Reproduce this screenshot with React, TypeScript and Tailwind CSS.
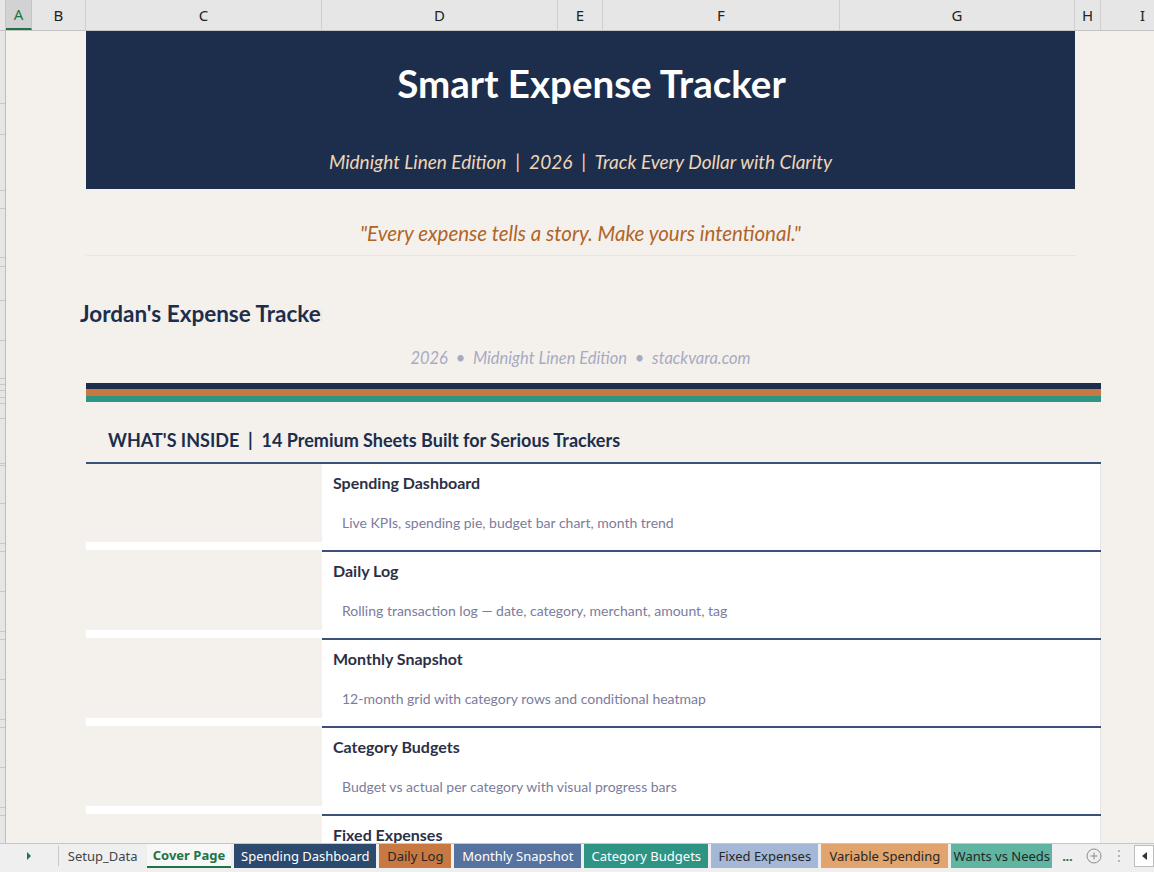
import React from 'react'

const cols = [
  { k: 'A', w: 26 },
  { k: 'B', w: 54 },
  { k: 'C', w: 236 },
  { k: 'D', w: 236 },
  { k: 'E', w: 45 },
  { k: 'F', w: 237 },
  { k: 'G', w: 235 },
  { k: 'H', w: 26 },
  { k: 'I', w: 84 },
]

const sheets = [
  { title: 'Spending Dashboard', desc: 'Live KPIs, spending pie, budget bar chart, month trend' },
  { title: 'Daily Log', desc: 'Rolling transaction log — date, category, merchant, amount, tag' },
  { title: 'Monthly Snapshot', desc: '12-month grid with category rows and conditional heatmap' },
  { title: 'Category Budgets', desc: 'Budget vs actual per category with visual progress bars' },
  { title: 'Fixed Expenses', desc: '' },
]

const tabs = [
  { name: 'Spending Dashboard', w: 142, cls: 'bg-[#2c4a6e] text-white' },
  { name: 'Daily Log', w: 72, cls: 'bg-[#c87941] text-[#262626]' },
  { name: 'Monthly Snapshot', w: 127, cls: 'bg-[#56729f] text-white' },
  { name: 'Category Budgets', w: 124, cls: 'bg-[#2e9483] text-white' },
  { name: 'Fixed Expenses', w: 107, cls: 'bg-[#a5b7d7] text-[#262626]' },
  { name: 'Variable Spending', w: 127, cls: 'bg-[#e0a46c] text-[#262626]' },
  { name: 'Wants vs Needs', w: 101, cls: 'bg-[#5fb5a2] text-[#262626]' },
]

// row boundaries drawn in the collapsed row-header strip
const rowLines = [103, 134, 190, 208, 257, 266, 300, 340, 378, 384, 390, 397, 403, 418, 463, 465, 503, 543, 551, 591, 631, 639, 679, 719, 727, 767, 807, 815]

function ColumnHeaders() {
  return (
    <div className="flex h-[31px] bg-[#e6e6e6] border-b border-[#c4c4c4] font-['Noto_Sans',sans-serif] text-[15px] text-[#222]">
      <div className="w-[6px] shrink-0 border-r border-[#c4c4c4]" />
      {cols.map((c) => (
        <div
          key={c.k}
          style={{ width: c.w }}
          className={
            c.k === 'A'
              ? 'shrink-0 flex items-center justify-center bg-[#d2d2d2] text-[#217346] border-b-2 border-[#217346] border-r border-r-[#c4c4c4]'
              : 'shrink-0 flex items-center justify-center border-r border-[#cfcfcf]'
          }
        >
          {c.k}
        </div>
      ))}
    </div>
  )
}

function SheetRow({ title, desc, first }: { title: string; desc: string; first: boolean }) {
  return (
    <>
      <div className={first ? 'ml-[80px] w-[1015px] h-[2px] bg-[#3a5178]' : 'ml-[316px] w-[779px] h-[2px] bg-[#3a5178]'} />
      <div className="ml-[80px] w-[1015px] flex">
        <div className="w-[236px] flex flex-col">
          <div className="h-[78px]" />
          <div className="h-[8px] bg-white" />
        </div>
        <div className="flex-1 bg-white flex flex-col border-r border-[#e4e4e4]">
          <div className="h-[38px] flex items-center pl-[11px] text-[16px] font-bold text-[#2b3047]">{title}</div>
          <div className="h-[40px] flex items-center pl-[20px] text-[14px] text-[#7c7c9c]">{desc}</div>
          <div className="h-[8px]" />
        </div>
      </div>
    </>
  )
}

function CoverSheet() {
  return (
    <div className="relative flex-1 overflow-hidden bg-[#f4f1ec] font-['Lato',sans-serif]">
      {/* banner */}
      <div className="ml-[80px] w-[989px] h-[158px] bg-[#1c2e4c] flex flex-col">
        <div className="h-[106px] flex items-center justify-center pl-[22px] text-[38.5px] font-bold text-white">
          Smart Expense Tracker
        </div>
        <div className="flex-1 flex items-center justify-center pb-[2px] italic text-[19px] text-[#f0d6b8] whitespace-pre">
          {'Midnight Linen Edition  |  2026  |  Track Every Dollar with Clarity'}
        </div>
      </div>

      <div className="ml-[80px] w-[989px] h-[67px] pt-[21px] border-b border-dotted border-[#efd6c0]">
        <div className="h-[46px] flex items-center justify-center italic text-[20.5px] text-[#b0642a]">
          "Every expense tells a story. Make yours intentional."
        </div>
      </div>

      <div className="h-[43px]" />
      <div className="w-[316px] h-[30px] overflow-hidden flex items-center">
        <div className="ml-[74px] whitespace-nowrap text-[22.5px] font-bold text-[#1c2e4c]">Jordan's Expense Tracker</div>
      </div>
      <div className="h-[17px]" />
      <div className="ml-[80px] w-[989px] h-[24px] flex items-center justify-center italic text-[16.5px] text-[#a9a9c2] whitespace-pre">
        {'2026  •  Midnight Linen Edition  •  stackvara.com'}
      </div>
      <div className="h-[13px]" />

      {/* tri-colour rule */}
      <div className="ml-[80px] w-[1015px] flex flex-col">
        <div className="h-[6px] bg-[#1c2e4c]" />
        <div className="h-[7px] bg-[#c87941]" />
        <div className="h-[6px] bg-[#2e9483]" />
      </div>

      <div className="h-[25px]" />
      <div className="ml-[80px] h-[26px] pl-[22px] flex items-center text-[18px] font-bold text-[#1c2e4c] whitespace-pre">
        {"WHAT'S INSIDE  |  14 Premium Sheets Built for Serious Trackers"}
      </div>
      <div className="h-[9px]" />

      {sheets.map((s, i) => (
        <SheetRow key={s.title} title={s.title} desc={s.desc} first={i === 0} />
      ))}
    </div>
  )
}

function RowStrip() {
  return (
    <div className="relative w-[6px] shrink-0 bg-[#e6e6e6] border-r border-[#bdbdbd]">
      {rowLines.map((y) => (
        <div key={y} className="absolute left-0 w-[5px] h-px bg-[#c8c8c8]" style={{ top: y - 31 }} />
      ))}
    </div>
  )
}

function TabBar() {
  return (
    <div className="h-[29px] flex items-start bg-[#efefef] border-t border-[#c6c6c6] font-['Noto_Sans',sans-serif] text-[13px] leading-none">
      <div className="w-[58px] h-[24px] flex items-center justify-center">
        <svg width="6" height="8" viewBox="0 0 6 8">
          <path d="M1 0 L5 4 L1 8 Z" fill="#217346" />
        </svg>
      </div>
      <div className="w-px h-[20px] mt-[2px] bg-[#c8c8c8]" />
      <div className="w-[88px] h-[24px] flex items-center justify-center text-[#444]">Setup_Data</div>
      <div className="w-[85px] h-[24px] flex items-center justify-center bg-[#f7f7f7] border-b-2 border-[#217346] font-bold text-[#217346]">
        Cover Page
      </div>
      {tabs.map((t) => (
        <div
          key={t.name}
          style={{ width: t.w }}
          className={`ml-[3px] h-[24px] shrink-0 flex items-center justify-center overflow-hidden whitespace-nowrap ${t.cls}`}
        >
          {t.name}
        </div>
      ))}
      <div className="w-[30px] h-[24px] flex items-center justify-center text-[#217346] font-bold tracking-tight">...</div>
      <div className="w-[24px] h-[24px] flex items-center justify-center">
        <svg width="16" height="16" viewBox="0 0 16 16" fill="none" stroke="#8a8a8a" strokeWidth="1">
          <circle cx="8" cy="8" r="7" />
          <path d="M8 4.5v7M4.5 8h7" />
        </svg>
      </div>
      <div className="w-[26px] h-[24px] flex flex-col items-center justify-center gap-[3px]">
        <div className="w-[2px] h-[2px] bg-[#b5b5b5]" />
        <div className="w-[2px] h-[2px] bg-[#b5b5b5]" />
        <div className="w-[2px] h-[2px] bg-[#b5b5b5]" />
      </div>
      <div className="ml-[2px] w-[20px] h-[22px] mt-[1px] bg-white border border-[#bdbdbd] flex items-center justify-center">
        <svg width="5" height="8" viewBox="0 0 5 8">
          <path d="M5 0 L0 4 L5 8 Z" fill="#333" />
        </svg>
      </div>
    </div>
  )
}

export default function App() {
  return (
    <div className="w-[1154px] h-[872px] overflow-hidden flex flex-col bg-[#f4f1ec]">
      <ColumnHeaders />
      <div className="flex h-[812px] overflow-hidden">
        <RowStrip />
        <CoverSheet />
      </div>
      <TabBar />
    </div>
  )
}
